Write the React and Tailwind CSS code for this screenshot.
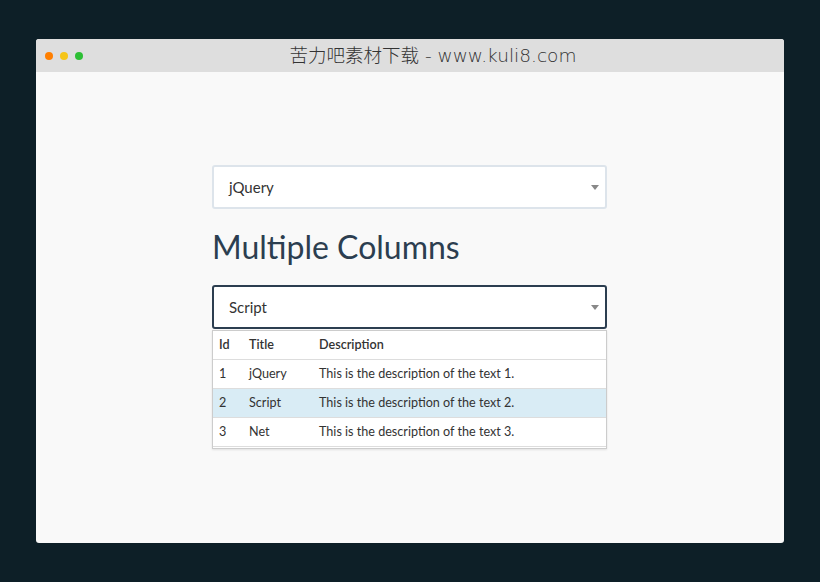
import React from 'react';

const rows = [
  { id: 1, title: 'jQuery', desc: 'This is the description of the text 1.' },
  { id: 2, title: 'Script', desc: 'This is the description of the text 2.' },
  { id: 3, title: 'Net', desc: 'This is the description of the text 3.' },
];

const Caret = () => (
  <svg width="8" height="5" viewBox="0 0 8 5" className="shrink-0">
    <path d="M0 0h8L4 5z" fill="#888" />
  </svg>
);

const App = () => {
  return (
    <div
      className="flex h-[582px] w-[820px] flex-col bg-[#0d1f27] px-[36px] pt-[39px] pb-[39px]"
      style={{ fontFamily: 'Lato, "Noto Sans", sans-serif' }}
    >
      <div className="flex flex-1 flex-col overflow-hidden rounded-[3px] bg-[#f9f9f9]">
        {/* 标题栏 */}
        <div className="relative flex h-[33px] items-center bg-[#dedede] px-[9px]">
          <div className="flex gap-[7px]">
            <span className="h-[8px] w-[8px] rounded-full bg-[#ff7f00]" />
            <span className="h-[8px] w-[8px] rounded-full bg-[#f5c518]" />
            <span className="h-[8px] w-[8px] rounded-full bg-[#2dbf35]" />
          </div>
          <div
            className="flex-1 pl-[8px] text-center text-[18.5px] font-light text-[#333]"
            style={{ fontFamily: '"DejaVu Sans", "Noto Sans CJK SC", sans-serif' }}
          >
            苦力吧素材下载 - www.kuli8.com
          </div>
        </div>

        {/* 内容 */}
        <div className="flex flex-col pl-[176px] pt-[93px]">
          <div className="w-[395px]">
            <div className="flex h-[44px] items-center justify-between rounded-[3px] border-2 border-[#dde4eb] bg-white pl-[15px] pr-[6px] text-[15px] text-[#333]">
              <span>jQuery</span>
              <Caret />
            </div>

            <h2 className="mt-[18px] text-[32px] leading-[40px] text-[#2c3e50]">
              Multiple Columns
            </h2>

            <div className="mt-[18px] flex h-[44px] items-center justify-between rounded-[3px] border-2 border-[#2c3e50] bg-white pl-[15px] pr-[6px] text-[15px] text-[#333]">
              <span>Script</span>
              <Caret />
            </div>

            <div className="mt-[1px] border border-[#ccc] bg-white pb-[1px] text-[12.6px] text-[#333] shadow-[0_1px_2px_rgba(0,0,0,0.1)]">
              <div className="flex h-[29px] items-center border-b border-[#ddd] font-semibold">
                <span className="w-[36px] pl-[6px]">Id</span>
                <span className="w-[70px]">Title</span>
                <span>Description</span>
              </div>
              {rows.map((r) => (
                <div
                  key={r.id}
                  className={
                    r.id === 2
                      ? 'flex h-[29px] items-center border-b border-[#ddd] bg-[#d9ecf5]'
                      : 'flex h-[29px] items-center border-b border-[#ddd]'
                  }
                >
                  <span className="w-[36px] pl-[6px]">{r.id}</span>
                  <span className="w-[70px]">{r.title}</span>
                  <span>{r.desc}</span>
                </div>
              ))}
            </div>
          </div>
        </div>
      </div>
    </div>
  );
};

export default App;
